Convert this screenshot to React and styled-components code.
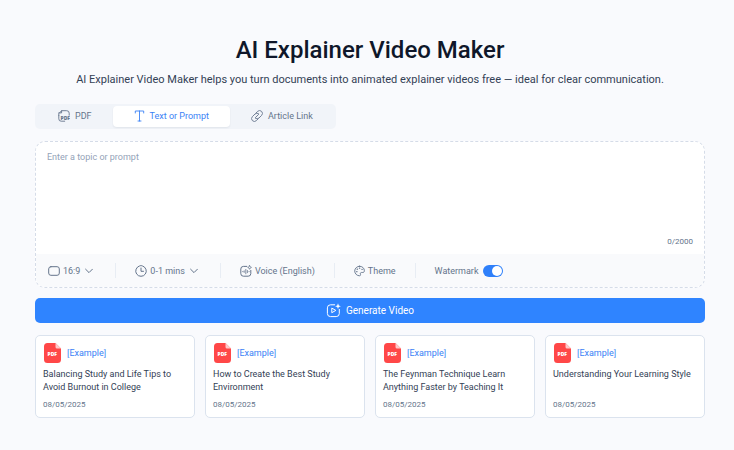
import React, { useState } from "react";
import styled, { createGlobalStyle } from "styled-components";

const GlobalStyle = createGlobalStyle`
  *, *::before, *::after { box-sizing: border-box; }
  body {
    margin: 0;
    background: #f9fafd;
    color: #334155;
    font-family: Roboto, "Liberation Sans", sans-serif;
    font-size: 9px;
  }
  button, textarea, input { font: inherit; color: inherit; }
`;

const Page = styled.main`
  padding: 32px 29px 32px 35px;
`;

const Title = styled.h1`
  margin: 0;
  color: #0f172a;
  font-size: 24px;
  font-weight: 500;
  line-height: 36px;
  text-align: center;
`;

const Subtitle = styled.p`
  margin: 4px 0 16px;
  font-size: 11px;
  line-height: 16px;
  text-align: center;
`;

const Tabs = styled.div`
  display: inline-flex;
  padding: 2px;
  height: 25px;
  border-radius: 5px;
  background: #f1f4f9;
  vertical-align: top;
`;

const Tab = styled.button`
  display: flex;
  align-items: center;
  gap: 5px;
  padding: 0 21px 1px;
  border: 0;
  border-radius: 4px;
  background: ${(p) => (p.$active ? "#fff" : "transparent")};
  box-shadow: ${(p) => (p.$active ? "0 1px 2px #0f172a12" : "none")};
  color: ${(p) => (p.$active ? "#3b82f6" : "#64748b")};
`;

const Composer = styled.section`
  margin-top: 12px;
  border: 1px dashed #d5dce8;
  border-radius: 10px;
  background: #fff;
  overflow: hidden;
`;

const Prompt = styled.textarea`
  display: block;
  width: 100%;
  height: 88px;
  padding: 9px 11px;
  border: 0;
  outline: 0;
  resize: none;
  background: transparent;
  line-height: 12px;
  &::placeholder { color: #94a3b8; opacity: 1; }
`;

const Counter = styled.div`
  padding: 6px 11px;
  color: #64748b;
  font-size: 8px;
  line-height: 12px;
  text-align: right;
`;

const Toolbar = styled.div`
  display: flex;
  align-items: center;
  height: 33px;
  padding: 0 12px;
  background: #f9fafc;
  color: #64748b;
`;

const Option = styled.button`
  display: flex;
  align-items: center;
  gap: 3px;
  padding: 0;
  border: 0;
  background: transparent;
`;

const Divider = styled.span`
  width: 1px;
  height: 15px;
  margin: 0 19px;
  background: #e8edf4;
`;

const SwitchLabel = styled.label`
  display: flex;
  align-items: center;
  gap: 5px;
`;

const Switch = styled.input`
  appearance: none;
  display: flex;
  width: 20px;
  height: 12px;
  margin: 0;
  padding: 1px;
  border-radius: 6px;
  background: #94a3b8;
  &::before {
    content: "";
    width: 10px;
    height: 10px;
    border-radius: 50%;
    background: #fff;
  }
  &:checked { justify-content: flex-end; background: #2f80fa; }
`;

const Generate = styled.button`
  display: flex;
  align-items: center;
  justify-content: center;
  gap: 5px;
  width: 100%;
  height: 25px;
  margin: 10px 0 12px;
  border: 0;
  border-radius: 5px;
  background: #2f84ff;
  color: #fff;
  font-size: 10px;
`;

const Cards = styled.div`
  display: grid;
  grid-template-columns: repeat(4, 1fr);
  gap: 10px;
`;

const Card = styled.article`
  display: flex;
  flex-direction: column;
  height: 83px;
  padding: 7px;
  border: 1px solid #dbe3ee;
  border-radius: 5px;
  background: #fff;
`;

const CardHead = styled.div`
  display: flex;
  align-items: center;
  gap: 6px;
  height: 20px;
  padding-left: 1px;
  color: #3b82f6;
`;

const CardTitle = styled.h2`
  margin: 5px 0 0;
  font-size: 9px;
  font-weight: 400;
  line-height: 13px;
`;

const CardDate = styled.time`
  margin-top: auto;
  color: #64748b;
  font-size: 8px;
  line-height: 11px;
`;

const Icon = styled.svg.attrs({ "aria-hidden": true })`
  flex: none;
  fill: none;
  stroke: currentColor;
  stroke-linecap: round;
  stroke-linejoin: round;
`;

const PdfMark = styled.text`
  fill: ${(p) => p.$fill};
  stroke: none;
  font-family: "Open Sans", sans-serif;
  font-size: 5px;
  font-weight: 800;
`;

const PdfIcon = () => (
  <Icon width="12" height="12" viewBox="0 0 12 12">
    <path d="M3.6.7h5.1a2.5 2.5 0 0 1 2.5 2.5v2M.8 5.5V3.6L3.6.7v2.2H.8M.8 5.5v3.3a2.4 2.4 0 0 0 2.4 2.4h3.5" strokeWidth=".9" />
    <PdfMark $fill="#64748b" x="2.5" y="9.5">PDF</PdfMark>
  </Icon>
);

const TextIcon = () => (
  <Icon width="11" height="12" viewBox="0 0 11 12">
    <path d="M1.3 3V1h8.4v2M5.5 1v10M4 11h3" strokeWidth=".9" />
  </Icon>
);

const LinkIcon = () => (
  <Icon width="12" height="12" viewBox="0 0 12 12">
    <path d="M4.9 3.1 6.6 1.4a2.8 2.8 0 0 1 4 4L8 8a2.8 2.8 0 0 1-3.7.2M7.1 8.9l-1.7 1.7a2.8 2.8 0 0 1-4-4L4 4a2.8 2.8 0 0 1 3.7-.2M4.5 7.5l3-3" strokeWidth=".9" />
  </Icon>
);

const RatioIcon = () => (
  <Icon width="12" height="10" viewBox="0 0 12 10">
    <rect x=".7" y=".7" width="10.6" height="8.6" rx="2.2" />
  </Icon>
);

const ClockIcon = () => (
  <Icon width="12" height="12" viewBox="0 0 12 12">
    <path d="M7.5.9a5.3 5.3 0 1 1-3 0M6 3v3.3h2.5" />
    <path d="M5.5.7h1" />
  </Icon>
);

const VoiceIcon = () => (
  <Icon width="12" height="12" viewBox="0 0 12 12">
    <path d="M6.8 1.4H3.4A2.6 2.6 0 0 0 .8 4v4.6a2.6 2.6 0 0 0 2.6 2.6h4.8a2.6 2.6 0 0 0 2.6-2.6V5.4" />
    <path d="M2.6 6.6h.5M4.2 5.8v1.6M5.8 4.4v4.4M7.4 5.5v2.2M8.9 6.6h.3" strokeWidth=".8" />
    <path d="m9.6.5.6 1.3 1.3.6-1.3.6-.6 1.3L9 3l-1.3-.6L9 1.8Z" strokeWidth=".7" />
  </Icon>
);

const PaletteIcon = () => (
  <Icon width="11" height="12" viewBox="0 0 12 12">
    <path d="M6 .8a5.2 5.2 0 1 0 0 10.4c1.2 0 1.4-1 1-1.8-.4-1 .2-1.8 1.2-1.8h1.4c1.1 0 1.7-.6 1.7-1.9C11.3 2.8 9 .8 6 .8Z" />
    <path d="M3 6.7h.2M3.5 4h.2M6 2.9h.2M8.7 4.2h.2" strokeWidth="1.5" />
  </Icon>
);

const GenerateIcon = () => (
  <Icon width="15" height="15" viewBox="0 0 15 15">
    <path d="M8.7 1.8H4.5a3.1 3.1 0 0 0-3.1 3.1v5.6a3.1 3.1 0 0 0 3.1 3.1h5.7a3.1 3.1 0 0 0 3.1-3.1V6.4" />
    <path d="M5.8 5.5v4.2L9.5 7.6Z" />
    <path d="m12 .3.8 2.1 2.1.8-2.1.8-.8 2.1-.8-2.1-2.1-.8 2.1-.8Z" fill="currentColor" stroke="none" />
  </Icon>
);

const ChevronIcon = styled(Icon)`
  margin: 0 3px 0 2px;
`;

const Chevron = () => (
  <ChevronIcon width="8" height="6" viewBox="0 0 8 6">
    <path d="m.6 1.2 3.4 3.4 3.4-3.4" />
  </ChevronIcon>
);

const FileIcon = () => (
  <Icon width="17" height="20" viewBox="0 0 17 20">
    <path d="M3.5 0h8L17 5.4v11.1a3.5 3.5 0 0 1-3.5 3.5h-10A3.5 3.5 0 0 1 0 16.5v-13A3.5 3.5 0 0 1 3.5 0Z" fill="#ff4747" stroke="none" />
    <path d="M11.5 0 17 5.4h-4a1.5 1.5 0 0 1-1.5-1.5Z" fill="#ffc9c9" stroke="none" />
    <PdfMark $fill="#fff" x="3.5" y="13">PDF</PdfMark>
  </Icon>
);

const tabs = [
  { label: "PDF", Glyph: PdfIcon },
  { label: "Text or Prompt", Glyph: TextIcon },
  { label: "Article Link", Glyph: LinkIcon },
];

const examples = [
  "Balancing Study and Life Tips to Avoid Burnout in College",
  "How to Create the Best Study Environment",
  "The Feynman Technique Learn Anything Faster by Teaching It",
  "Understanding Your Learning Style",
];

export default function App() {
  const [active, setActive] = useState("Text or Prompt");
  const [prompt, setPrompt] = useState("");

  return (
    <>
      <GlobalStyle />
      <Page>
        <Title>AI Explainer Video Maker</Title>
        <Subtitle>
          AI Explainer Video Maker helps you turn documents into animated explainer videos free — ideal for clear communication.
        </Subtitle>
        <Tabs role="tablist">
          {tabs.map(({ label, Glyph }) => (
            <Tab
              key={label}
              type="button"
              role="tab"
              aria-selected={active === label}
              $active={active === label}
              onClick={() => setActive(label)}
            >
              <Glyph />
              {label}
            </Tab>
          ))}
        </Tabs>
        <Composer>
          <Prompt
            aria-label="Topic or prompt"
            placeholder="Enter a topic or prompt"
            maxLength={2000}
            value={prompt}
            onChange={(e) => setPrompt(e.target.value)}
          />
          <Counter>{prompt.length}/2000</Counter>
          <Toolbar>
            <Option type="button"><RatioIcon />16:9 <Chevron /></Option>
            <Divider />
            <Option type="button"><ClockIcon />0-1 mins <Chevron /></Option>
            <Divider />
            <Option type="button"><VoiceIcon />Voice (English)</Option>
            <Divider />
            <Option type="button"><PaletteIcon />Theme</Option>
            <Divider />
            <SwitchLabel>
              Watermark
              <Switch type="checkbox" role="switch" defaultChecked />
            </SwitchLabel>
          </Toolbar>
        </Composer>
        <Generate type="button"><GenerateIcon />Generate Video</Generate>
        <Cards>
          {examples.map((title) => (
            <Card key={title}>
              <CardHead><FileIcon />[Example]</CardHead>
              <CardTitle>{title}</CardTitle>
              <CardDate dateTime="2025-08-05">08/05/2025</CardDate>
            </Card>
          ))}
        </Cards>
      </Page>
    </>
  );
}
